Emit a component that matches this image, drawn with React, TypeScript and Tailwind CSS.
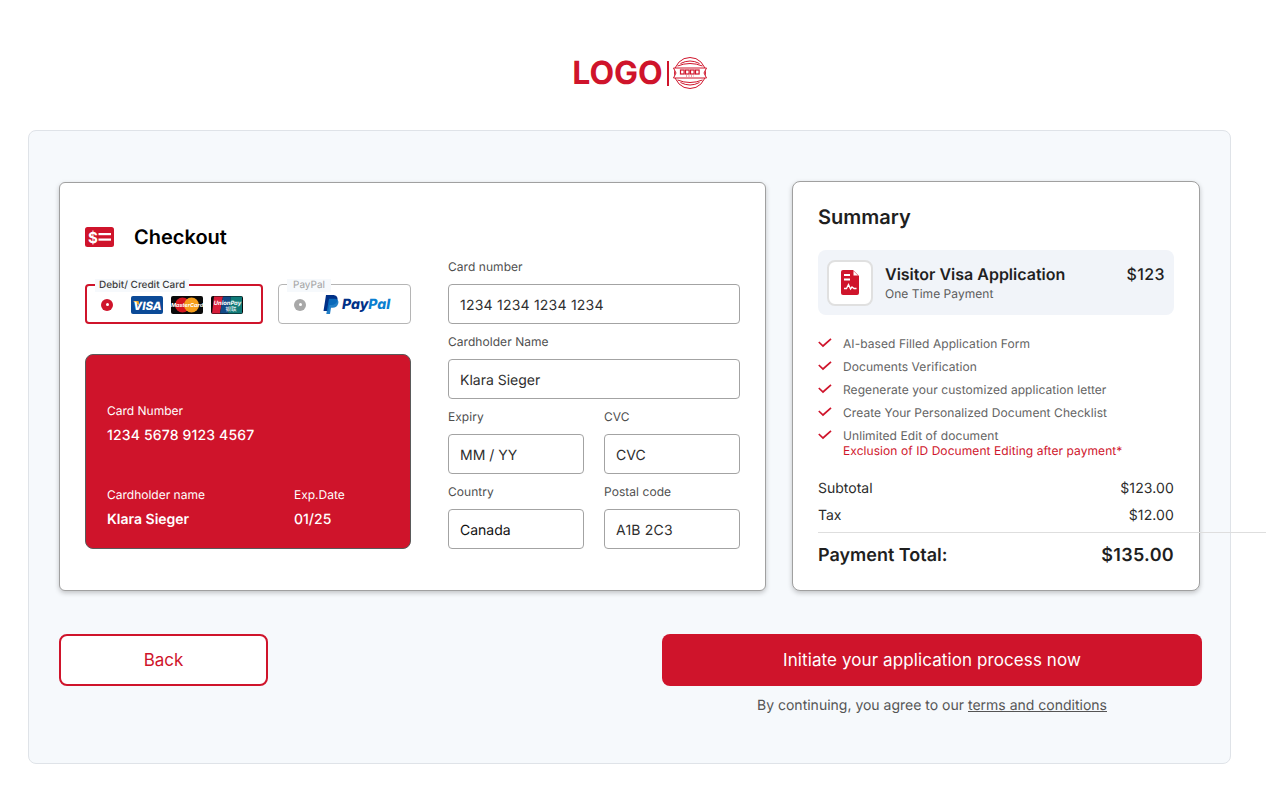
import React from "react";

const RED = "#cf142b";

function Field({ label, value, className = "", dark = false, digits = false }: { label: string; value: string; className?: string; dark?: boolean; digits?: boolean }) {
  return (
    <div className={className}>
      <div className="h-5 text-[12px] leading-5 text-[#4f4f4f] mb-[7px] tracking-[0.05px]">{label}</div>
      <div className={`h-10 rounded border border-[#a3a3a3] bg-white px-[11px] pt-[2px] flex items-center text-[14px] ${dark ? "text-[#111111]" : "text-[#2e2e2e]"} ${digits ? "tracking-[0.22px]" : ""}`}>
        {value}
      </div>
    </div>
  );
}

function Check() {
  return (
    <svg width="14" height="10" viewBox="0 0 14 10" fill="none" className="shrink-0 mt-[2px]">
      <path d="M0.800 4 L5 8 L13 0.800" stroke={RED} strokeWidth="1.700" />
    </svg>
  );
}

function Seal() {
  return (
    <svg width="34" height="34" viewBox="0 0 34 34" fill="none" stroke={RED} strokeWidth="1">
      <circle cx="17" cy="17" r="15.500" />
      <path d="M7.500 7.500 Q17 2.500 26.500 7.500" />
      <path d="M4.500 10 Q17 5 29.500 10" />
      <path d="M7.500 26.500 Q17 31.500 26.500 26.500" />
      <path d="M4.500 24 Q17 29 29.500 24" />
      <path d="M0.500 12 H33.500 L31 17 L33.500 22 H0.500 L3 17 Z" fill="#fff" />
      <g strokeWidth="1.200">
        <rect x="7.500" y="14" width="3.600" height="4" />
        <rect x="12.500" y="14" width="3.600" height="4" />
        <rect x="17.500" y="14" width="3.600" height="4" />
        <rect x="22.500" y="14" width="3.600" height="4" />
      </g>
      <path d="M13 20 H21" strokeDasharray="1 1.500" strokeWidth="0.800" />
    </svg>
  );
}

function MoneyIcon() {
  return (
    <svg width="29" height="20" viewBox="0 0 29 20">
      <rect width="29" height="20" rx="2.500" fill={RED} />
      <text x="3" y="15.500" fontSize="15" fontWeight="700" fill="#fff" fontFamily="Inter, sans-serif">$</text>
      <rect x="13.500" y="6" width="12.500" height="2.200" fill="#fff" />
      <rect x="13.500" y="11.500" width="12.500" height="2.200" fill="#fff" />
    </svg>
  );
}

function Visa() {
  return (
    <svg width="32" height="18" viewBox="0 0 32 18">
      <rect width="32" height="18" rx="2" fill="#0b4a97" />
      <path d="M2 5 H7.500 L8.500 9.500 Z" fill="#f3a92c" />
      <text x="16.500" y="13.500" textAnchor="middle" fontSize="11.500" fontWeight="800" fontStyle="italic" fill="#fff" fontFamily="Inter, sans-serif">VISA</text>
    </svg>
  );
}

function Master() {
  return (
    <svg width="32" height="18" viewBox="0 0 32 18">
      <rect width="32" height="18" rx="2" fill="#0a0a0a" />
      <circle cx="11.500" cy="9" r="7.500" fill="#d4161f" />
      <circle cx="20.500" cy="9" r="7.500" fill="#f59e1b" />
      <text x="16" y="11" textAnchor="middle" fontSize="5.500" fontWeight="700" fontStyle="italic" fill="#fff" fontFamily="Inter, sans-serif">MasterCard</text>
    </svg>
  );
}

function Union() {
  return (
    <svg width="32" height="18" viewBox="0 0 32 18">
      <rect width="32" height="18" rx="2" fill="#0a0a0a" />
      <path d="M3 0.500 H12 L9 17.500 H1 Z" fill="#d81e3a" />
      <path d="M12 0.500 H20 L17 17.500 H9 Z" fill="#124a86" />
      <path d="M20 0.500 H31 V17.500 H17 Z" fill="#0f7a78" />
      <text x="16.500" y="8.500" textAnchor="middle" fontSize="5.800" fontWeight="700" fontStyle="italic" fill="#fff" fontFamily="Inter, sans-serif">UnionPay</text>
      <text x="20" y="15" textAnchor="middle" fontSize="5.500" fill="#fff" fontFamily="'Noto Sans CJK SC', sans-serif">银联</text>
    </svg>
  );
}

function PayPalMark() {
  return (
    <svg width="16" height="19" viewBox="0 0 16 19">
      <path d="M3 0 H9.500 C13.500 0 15 2.200 14.500 5 C13.900 8.500 11.500 10 8.500 10 H6.500 L5.300 16 H0.500 Z" fill="#003087" />
      <path d="M6 3.800 H10.500 C14.500 3.800 16 5.800 15.300 8.200 C14.500 11.200 12.500 12.700 9.500 12.700 H8 L7 19 H3.300 Z" fill="#0a70c0" opacity="0.9" />
    </svg>
  );
}

function DocIcon() {
  return (
    <svg width="18" height="25" viewBox="0 0 18 25">
      <path d="M2 0 H12 L18 6 V23 A2 2 0 0 1 16 25 H2 A2 2 0 0 1 0 23 V2 A2 2 0 0 1 2 0 Z" fill={RED} />
      <path d="M12.500 1 V5.500 H17 Z" fill="#fff" />
      <rect x="3" y="4" width="6" height="2" fill="#fff" />
      <rect x="3" y="8.500" width="6" height="2" fill="#fff" />
      <path d="M3 18.500 H5.500 L7.500 14.500 L9.500 19 L11 17 L13 18.500 H15.500" stroke="#fff" strokeWidth="1.300" fill="none" />
    </svg>
  );
}

export default function App() {
  return (
    <div className="w-[1280px] h-[800px] bg-white overflow-hidden font-['Inter',sans-serif] [text-rendering:geometricPrecision]">
      <div className="h-[130px] flex items-start justify-center pt-[56px] pr-px">
        <div className="flex items-center h-[34px]">
          <span className="text-[32px] leading-none font-bold text-[#cf142b]">LOGO</span>
          <span className="w-[2px] h-[25px] bg-[#cf142b] ml-[4px] mr-[4px]" />
          <Seal />
        </div>
      </div>

      <div className="ml-[28px] w-[1203px] h-[634px] rounded-lg border border-[#dfe3e8] bg-[#f6f9fc] pl-[30px] pt-[50px]">
        <div className="flex items-start gap-[26px]">
          {/* Checkout card */}
          <div className="w-[707px] h-[409px] mt-px rounded-md border border-[#a0a0a0] bg-white shadow-[0_2px_5px_rgba(0,0,0,0.22)] pl-[25px] flex gap-[37px]">
            <div className="w-[326px] pt-[44px]">
              <div className="flex items-center gap-5 h-5">
                <MoneyIcon />
                <span className="text-[20px] font-semibold text-black">Checkout</span>
              </div>
              <div className="flex gap-[15px] mt-[37px]">
                <div className="relative w-[178px] h-10 rounded border-2 border-[#cf142b] flex items-center pl-[14px]">
                  <span className="absolute left-[8px] top-[-7px] bg-[#f6f9fc] px-[4px] text-[10px] leading-[13px] font-medium text-[#3d3d3d]">
                    Debit/ Credit Card
                  </span>
                  <span className="w-3 h-3 mt-px rounded-full bg-[#cf142b] flex items-center justify-center mr-[18px]">
                    <span className="w-[3px] h-[3px] rounded-full bg-white" />
                  </span>
                  <span className="flex gap-2 mt-px">
                    <Visa />
                    <Master />
                    <Union />
                  </span>
                </div>
                <div className="relative w-[133px] h-10 rounded border border-[#b5b5b5] flex items-center pl-[15px]">
                  <span className="absolute left-[8px] top-[-6px] bg-[#f6f9fc] px-[6px] text-[10px] leading-[13px] text-[#a3a3a3]">
                    PayPal
                  </span>
                  <span className="w-3 h-3 mt-px rounded-full bg-[#a8a8a8] flex items-center justify-center mr-[17px]">
                    <span className="w-[3px] h-[3px] rounded-full bg-white" />
                  </span>
                  <PayPalMark />
                  <span className="ml-[3px] text-[14px] font-extrabold italic text-[#003087]">
                    Pay<span className="text-[#0a7fd0]">Pal</span>
                  </span>
                </div>
              </div>
              <div className="mt-[30px] h-[195px] rounded-lg border border-[#5a5a5a] bg-[#cf142b] px-[21px] pt-[48px] text-white">
                <div className="text-[12px] leading-[16px]">Card Number</div>
                <div className="mt-[8px] text-[14px] leading-[17px] font-medium tracking-[0.16px]">1234 5678 9123 4567</div>
                <div className="flex mt-[43px]">
                  <div className="w-[187px]">
                    <div className="text-[12px] leading-[16px]">Cardholder name</div>
                    <div className="mt-[8px] text-[14px] leading-[17px] font-semibold">Klara Sieger</div>
                  </div>
                  <div>
                    <div className="text-[12px] leading-[16px]">Exp.Date</div>
                    <div className="mt-[8px] text-[14px] leading-[17px] font-medium">01/25</div>
                  </div>
                </div>
              </div>
            </div>

            <div className="w-[292px] pt-[74px] flex flex-col gap-2">
              <Field label="Card number" value="1234 1234 1234 1234" digits />
              <Field label="Cardholder Name" value="Klara Sieger" />
              <div className="flex gap-5">
                <Field label="Expiry" value="MM / YY" className="w-[136px]" />
                <Field label="CVC" value="CVC" className="w-[136px]" />
              </div>
              <div className="flex gap-5">
                <Field label="Country" value="Canada" className="w-[136px]" dark />
                <Field label="Postal code" value="A1B 2C3" className="w-[136px]" digits />
              </div>
            </div>
          </div>

          {/* Summary card */}
          <div className="w-[408px] h-[410px] rounded-lg border border-[#a0a0a0] bg-white shadow-[0_2px_5px_rgba(0,0,0,0.22)] pl-[25px] pr-[25px] pt-[23px]">
            <div className="text-[20px] leading-[24px] font-semibold text-[#1f1f1f]">Summary</div>
            <div className="mt-[21px] h-[65px] rounded-lg bg-[#f1f4f9] flex items-center pl-[9px] pr-[9px]">
              <div className="w-[46px] h-[46px] rounded-lg border-2 border-[#e0e0e0] bg-white flex items-center justify-center">
                <DocIcon />
              </div>
              <div className="ml-3 flex-1 pt-px">
                <div className="flex justify-between text-[16px] leading-[20px] text-[#1f1f1f]">
                  <span className="font-semibold">Visitor Visa Application</span>
                  <span className="font-medium tracking-[0.4px]">$123</span>
                </div>
                <div className="mt-[2px] text-[12px] leading-[16px] text-[#5c5c5c] tracking-[0.05px]">One Time Payment</div>
              </div>
            </div>
            <ul className="mt-[21px] flex flex-col gap-[7px] text-[12px] leading-[16px] text-[#636363] tracking-[0.07px]">
              {[
                "AI-based Filled Application Form",
                "Documents Verification",
                "Regenerate your customized application letter",
                "Create Your Personalized Document Checklist",
              ].map((t) => (
                <li key={t} className="flex items-start gap-[11px]">
                  <Check />
                  <span>{t}</span>
                </li>
              ))}
              <li className="flex items-start gap-[11px]">
                <Check />
                <span className="leading-[15px]">
                  Unlimited Edit of document
                  <br />
                  <span className="text-[#cf142b]">Exclusion of ID Document Editing after payment*</span>
                </span>
              </li>
            </ul>
            <div className="relative mt-[16px] text-[14px] text-[#2b2b2b]">
              <div className="flex justify-between h-[27px] pt-[2px] items-center">
                <span>Subtotal</span>
                <span className="tracking-[0.12px]">$123.00</span>
              </div>
              <div className="flex justify-between h-[27px] pt-[2px] items-center">
                <span>Tax</span>
                <span className="tracking-[0.12px]">$12.00</span>
              </div>
              <div className="absolute left-0 top-[58px] w-[448px] h-px bg-[#dedede]" />
              <div className="flex justify-between items-center mt-[15px] h-[24px] text-[#1f1f1f]">
                <span className="text-[18px] font-semibold">Payment Total:</span>
                <span className="text-[18px] font-semibold tracking-[0.3px]">$135.00</span>
              </div>
            </div>
          </div>
        </div>

        <div className="flex justify-between items-start w-[1143px] mt-[43px]">
          <button className="w-[209px] h-[52px] rounded-lg border-2 border-[#cf142b] bg-white pt-px text-[17px] text-[#cf142b]">
            Back
          </button>
          <div className="w-[540px] flex flex-col items-center">
            <button className="w-full h-[52px] rounded-lg bg-[#cf142b] pt-px text-[17px] tracking-[0.1px] text-white">
              Initiate your application process now
            </button>
            <div className="mt-[11px] text-[14px] leading-[18px] text-[#555555]">
              By continuing, you agree to our <span className="underline">terms and conditions</span>
            </div>
          </div>
        </div>
      </div>
    </div>
  );
}
